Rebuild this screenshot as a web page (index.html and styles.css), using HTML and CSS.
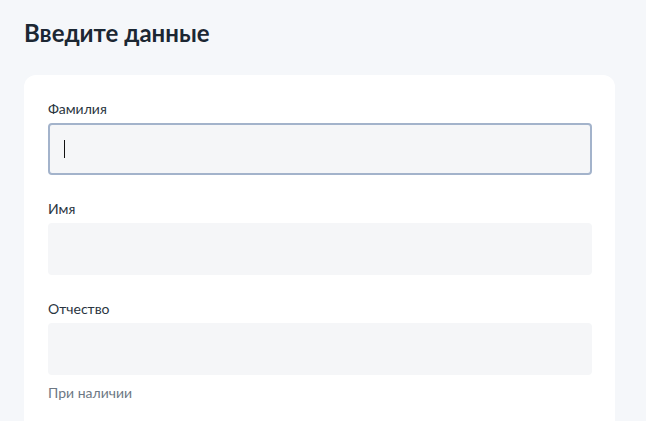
FILE: index.html
```html
<!DOCTYPE html>
<html lang="ru">
<head>
<meta charset="utf-8">
<title>Введите данные</title>
<link rel="stylesheet" href="styles.css">
</head>
<body>
<main class="page">
  <h1 class="title">Введите данные</h1>
  <section class="card">
    <div class="field">
      <label class="label">Фамилия</label>
      <div class="input input--focused"><span class="caret"></span></div>
    </div>
    <div class="field">
      <label class="label">Имя</label>
      <div class="input"></div>
    </div>
    <div class="field">
      <label class="label">Отчество</label>
      <div class="input"></div>
      <div class="hint">При наличии</div>
    </div>
  </section>
</main>
</body>
</html>
```
FILE: styles.css
```css
html, body {
  margin: 0;
  padding: 0;
  height: 100%;
  overflow: hidden;
}
body {
  background: #f5f7fa;
  font-family: Lato, "Noto Sans", "Liberation Sans", sans-serif;
  color: #1f2d3d;
}
.page {
  padding: 17px 0 0 24px;
}
.title {
  margin: 0;
  font-size: 24px;
  line-height: 32px;
  font-weight: 700;
  color: #1c2733;
}
.card {
  margin-top: 26px;
  width: 591px;
  box-sizing: border-box;
  background: #ffffff;
  border-radius: 12px;
  padding: 24px 24px 40px 24px;
  display: flex;
  flex-direction: column;
  gap: 24px;
}
.field {
  display: flex;
  flex-direction: column;
}
.label {
  font-size: 14px;
  line-height: 20px;
  margin-bottom: 4px;
  color: #2a3541;
}
.input {
  height: 52px;
  width: 544px;
  box-sizing: border-box;
  background: #f5f6f8;
  border: 2px solid #f5f6f8;
  border-radius: 4px;
  display: flex;
  align-items: center;
  padding-left: 14px;
}
.input--focused {
  border-color: #a3b3cb;
}
.caret {
  width: 1px;
  height: 18px;
  background: #111;
}
.hint {
  margin-top: 8px;
  font-size: 14px;
  line-height: 20px;
  color: #6d7884;
}
```
